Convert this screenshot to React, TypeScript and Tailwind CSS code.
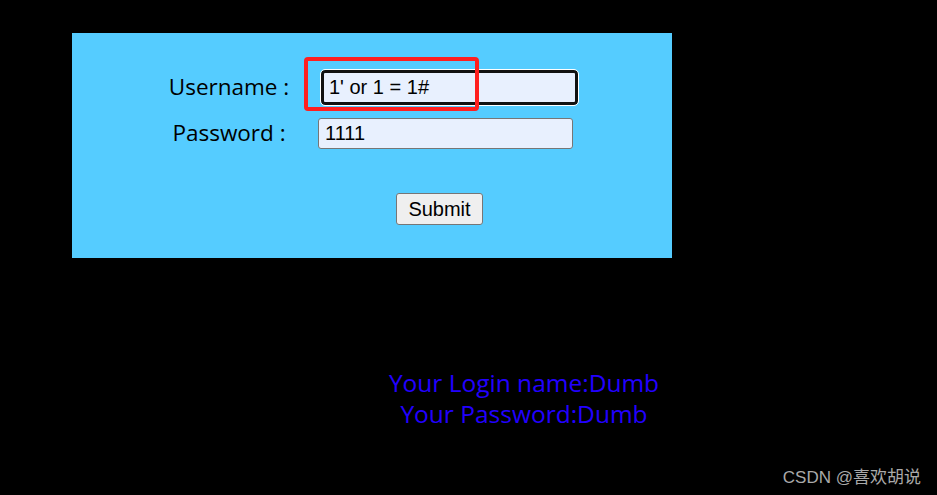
import React from 'react'

const seg = { fontFamily: '"Open Sans", "Noto Sans", sans-serif' }
const arial = { fontFamily: '"Liberation Sans", Arial, sans-serif' }

export default function App() {
  return (
    <div className="relative h-[495px] w-[937px] overflow-hidden bg-black">
      <div className="pl-[72px] pt-[33px]">
        <div className="relative h-[225px] w-[600px] bg-[#55ccff]">
          {/* form rows */}
          <div className="flex flex-col pt-[37px]">
            <div className="flex h-[35px] items-center">
              <label
                style={seg}
                className="-mt-[2px] w-[246px] pl-[68px] text-center text-[22.5px] text-black"
              >
                Username :
              </label>
              <input
                readOnly
                value="1' or 1 = 1#"
                style={arial}
                className="ml-[3px] h-[35px] w-[257px] rounded-[4px] border-[3px] border-[#111] bg-[#e8f0fe] px-[5px] text-[20px] text-black outline outline-1 outline-white"
              />
            </div>
            <div className="mt-[13px] flex h-[31px] items-center">
              <label
                style={seg}
                className="-mt-[2px] w-[246px] pl-[68px] text-center text-[22.5px] text-black"
              >
                Password :
              </label>
              <input
                readOnly
                value="1111"
                style={arial}
                className="h-[31px] w-[255px] rounded-[3px] border border-[#767676] bg-[#e8f0fe] px-[6px] text-[20px] text-black outline-none"
              />
            </div>
            <div className="mt-[44px] flex pl-[324px]">
              <button
                style={arial}
                className="h-[32px] w-[87px] rounded-[3px] border border-[#767676] bg-[#efefef] text-[20px] text-black"
              >
                Submit
              </button>
            </div>
          </div>
          {/* annotation box */}
          <div className="absolute left-[232px] top-[24px] h-[54px] w-[175px] rounded-[4px] border-[4px] border-[#ff1f1f]" />
        </div>
      </div>

      <div style={seg} className="mt-[109px] text-center text-[24.5px] leading-[31px] text-[#2200ff]">
        <div className="pl-[111px]">Your Login name:Dumb</div>
        <div className="pl-[111px]">Your Password:Dumb</div>
      </div>

      <div
        style={{ fontFamily: '"Liberation Sans", "Noto Sans CJK SC", sans-serif' }}
        className="absolute right-[16px] top-[465px] text-[17px] text-[#a9a9a9]"
      >
        CSDN @喜欢胡说
      </div>
    </div>
  )
}
